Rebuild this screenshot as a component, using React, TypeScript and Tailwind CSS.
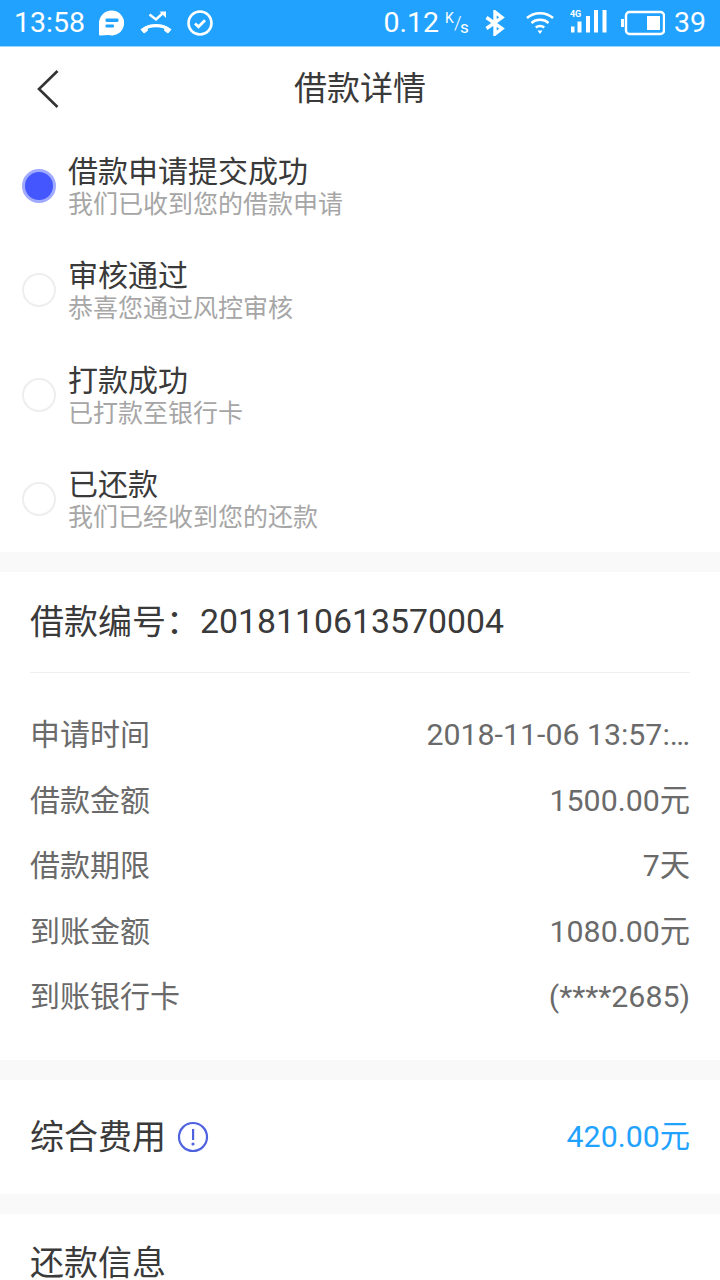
const font = { fontFamily: 'Roboto, "Noto Sans CJK SC", sans-serif' };

const steps = [
  { t: "借款申请提交成功", s: "我们已收到您的借款申请", on: true },
  { t: "审核通过", s: "恭喜您通过风控审核", on: false },
  { t: "打款成功", s: "已打款至银行卡", on: false },
  { t: "已还款", s: "我们已经收到您的还款", on: false },
];

const rows = [
  ["申请时间", "2018-11-06 13:57:…"],
  ["借款金额", "1500.00元"],
  ["借款期限", "7天"],
  ["到账金额", "1080.00元"],
  ["到账银行卡", "(****2685)"],
];

function StatusBar() {
  return (
    <div className="h-[47px] border-b border-[#9ad6ff] bg-[#22a2ff] flex items-center justify-between px-[14px] text-white text-[28.500px] leading-none shrink-0">
      <div className="flex items-center">
        <span>13:58</span>
        <svg className="ml-[14px]" width="25" height="26" viewBox="0 0 25 26">
          <path d="M12.500 .5a12.500 12.500 0 1 1 -3 24.600L1.500 25.500C.6 25.500 0 25 0 24V13A12.500 12.500 0 0 1 12.500 .5z" fill="#fff" />
          <rect x="6.500" y="8.500" width="13" height="3.500" rx="1.200" fill="#22a2ff" />
          <rect x="6.500" y="14.500" width="8.500" height="3" rx="1" fill="#22a2ff" />
        </svg>
        <svg className="ml-[16px]" width="32" height="26" viewBox="0 0 32 26" fill="none">
          <path d="M2.500 20.500C9 14 23 14 29.500 20.500" stroke="#fff" strokeWidth="3.200" />
          <path d="M1 19.500l5-3 1.500 4-3.500 2.500z M31 19.500l-5-3-1.500 4 3.500 2.500z" fill="#fff" stroke="#fff" strokeLinejoin="round" />
          <path d="M9.500 4.500l6.500 5L23 3" stroke="#fff" strokeWidth="2.400" />
          <path d="M19.500 1.500h6.500v6.500z" fill="#fff" />
        </svg>
        <svg className="ml-[15px]" width="26" height="26" viewBox="0 0 26 26" fill="none">
          <circle cx="13" cy="13" r="11.500" stroke="#fff" strokeWidth="2.600" />
          <path d="M8 13.500l3.500 3.300 6.500-6.500" stroke="#fff" strokeWidth="2.800" />
        </svg>
      </div>
      <div className="flex items-center">
        <span>0.12</span>
        <span className="ml-[6px] relative w-[24px] h-[26px] leading-none">
          <span className="absolute left-0 top-[1px] text-[14px]">K</span>
          <span className="absolute left-[9px] top-[3px] text-[19px] font-light">/</span>
          <span className="absolute left-[15px] top-[9px] text-[17px]">s</span>
        </span>
        <svg className="ml-[16px]" width="20" height="26" viewBox="0 0 20 26" fill="none">
          <path d="M1.500 7.500L17 18.500l-7 5.500V2l7 5.500L1.500 18.500" stroke="#fff" strokeWidth="3.400" />
        </svg>
        <svg className="ml-[21px]" width="28" height="26" viewBox="0 0 28 26" fill="none">
          <path d="M1 8c7-6.500 19-6.500 26 0" stroke="#fff" strokeWidth="2.500" />
          <path d="M5.500 13c4.500-4.200 12.500-4.200 17 0" stroke="#fff" strokeWidth="2.500" />
          <path d="M9.800 17.500c2.300-2.100 6.100-2.100 8.400 0" stroke="#fff" strokeWidth="2.500" />
          <path d="M11.500 20.500h5L14 24z" fill="#fff" />
        </svg>
        <span className="ml-[16px] relative w-[37px] h-[26px]">
          <span className="absolute left-0 top-[-1px] text-[9px] leading-[10px] font-bold">4G</span>
          <svg className="absolute left-0 top-0" width="37" height="26" viewBox="0 0 37 26" fill="#fff">
            <rect x="1" y="16.500" width="3.500" height="6" />
            <rect x="7.500" y="11.500" width="4" height="11" />
            <rect x="16" y="6" width="4" height="16.500" />
            <rect x="24" y="0" width="4" height="22.500" />
            <rect x="32.500" y="0" width="4" height="22.500" />
          </svg>
        </span>
        <svg className="ml-[14px]" width="44" height="26" viewBox="0 0 44 26" fill="none">
          <rect x="5" y="2" width="38" height="22" rx="3.500" stroke="#fff" strokeWidth="2.400" />
          <rect x="0" y="9" width="3" height="8" fill="#fff" />
          <rect x="26" y="6" width="13" height="14" fill="#fff" />
        </svg>
        <span className="ml-[9px]">39</span>
      </div>
    </div>
  );
}

export default function App() {
  return (
    <div className="w-[720px] h-[1280px] overflow-hidden bg-white flex flex-col" style={font}>
      <StatusBar />
      <div className="h-[83px] relative flex items-center justify-center text-[33px] text-[#3a3a3a] shrink-0">
        <svg className="absolute left-[36px] top-[22px]" width="24" height="40" viewBox="0 0 24 40" fill="none">
          <path d="M21.500 2L3 20l18.500 18" stroke="#333" strokeWidth="2.600" />
        </svg>
        <span>借款详情</span>
      </div>
      <div className="h-[422px] shrink-0 pt-[23.500px]">
        {steps.map((x) => (
          <div key={x.t} className="h-[104.500px] flex items-start pl-[22px]">
            <div className="pt-[15px]">
              {x.on ? (
                <div className="w-[34px] h-[34px] rounded-full bg-[#4457ff] border-[3.500px] border-[#a0abff]" />
              ) : (
                <div className="w-[34px] h-[34px] rounded-full border-2 border-[#eeeeee]" />
              )}
            </div>
            <div className="ml-[12px]">
              <div className="text-[30px] leading-[36px] text-[#3a3a3a]">{x.t}</div>
              <div className="text-[25px] leading-[29px] text-[#a6a6a6]">{x.s}</div>
            </div>
          </div>
        ))}
      </div>
      <div className="h-[20px] bg-[#f9f9f9] shrink-0" />
      <div className="h-[488px] px-[30px] shrink-0">
        <div className="h-[101px] flex items-center border-b border-[#eeeeee] text-[34px] text-[#3a3a3a]">
          借款编号：<span className="text-[33.800px]">2018110613570004</span>
        </div>
        <div className="pt-[29px]">
          {rows.map(([a, b]) => (
            <div key={a} className="h-[65.500px] flex items-center justify-between text-[30px] text-[#6a6a6a]">
              <span>{a}</span>
              <span className="text-[30.300px]">{b}</span>
            </div>
          ))}
        </div>
      </div>
      <div className="h-[20px] bg-[#f9f9f9] shrink-0" />
      <div className="h-[114px] px-[30px] flex items-center justify-between shrink-0">
        <div className="flex items-center text-[34px] text-[#3a3a3a]">
          综合费用
          <svg className="ml-[11px]" width="32" height="32" viewBox="0 0 32 32" fill="none">
            <circle cx="16" cy="16" r="14" stroke="#4f63e0" strokeWidth="2.200" />
            <rect x="15" y="8" width="2.200" height="11" fill="#4f63e0" />
            <circle cx="16" cy="23" r="1.600" fill="#4f63e0" />
          </svg>
        </div>
        <span className="text-[30.300px] text-[#22a2ff]">420.00元</span>
      </div>
      <div className="h-[20px] bg-[#f9f9f9] shrink-0" />
      <div className="px-[30px] pt-[27px] text-[34px] leading-[44px] text-[#3a3a3a] shrink-0">还款信息</div>
    </div>
  );
}
